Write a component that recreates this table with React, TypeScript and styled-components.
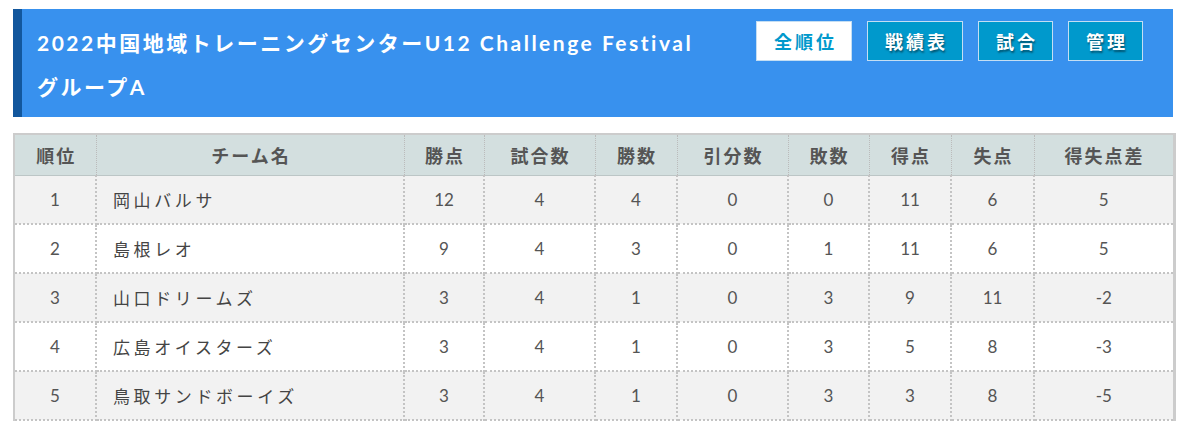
import styled, { createGlobalStyle } from 'styled-components';

interface TeamRow {
  rank: number;
  name: string;
  points: number;
  played: number;
  won: number;
  drawn: number;
  lost: number;
  goalsFor: number;
  goalsAgainst: number;
}

const ROWS: TeamRow[] = [
  { rank: 1, name: '岡山バルサ', points: 12, played: 4, won: 4, drawn: 0, lost: 0, goalsFor: 11, goalsAgainst: 6 },
  { rank: 2, name: '島根レオ', points: 9, played: 4, won: 3, drawn: 0, lost: 1, goalsFor: 11, goalsAgainst: 6 },
  { rank: 3, name: '山口ドリームズ', points: 3, played: 4, won: 1, drawn: 0, lost: 3, goalsFor: 9, goalsAgainst: 11 },
  { rank: 4, name: '広島オイスターズ', points: 3, played: 4, won: 1, drawn: 0, lost: 3, goalsFor: 5, goalsAgainst: 8 },
  { rank: 5, name: '鳥取サンドボーイズ', points: 3, played: 4, won: 1, drawn: 0, lost: 3, goalsFor: 3, goalsAgainst: 8 },
];

const COLUMNS = [
  { label: '順位', width: 82 },
  { label: 'チーム名', width: 308 },
  { label: '勝点', width: 80 },
  { label: '試合数', width: 111 },
  { label: '勝数', width: 82 },
  { label: '引分数', width: 111 },
  { label: '敗数', width: 81 },
  { label: '得点', width: 82 },
  { label: '失点', width: 83 },
  { label: '得失点差', width: 140 },
];

const NAV = ['全順位', '戦績表', '試合', '管理'];

const GlobalStyle = createGlobalStyle`
  body {
    margin: 0;
    background: #fff;
    font-family: Lato, 'Noto Sans CJK JP', sans-serif;
  }
`;

const Page = styled.div`
  padding: 9px 12px 0 13px;
  width: 1160px;
`;

const TitleBar = styled.header`
  display: flex;
  justify-content: space-between;
  align-items: flex-start;
  background: #3891ee;
  border-left: 9px solid #12579d;
  height: 108px;
  box-sizing: border-box;
  padding: 12px 30px 0 15px;
`;

const Title = styled.h1`
  margin: 0;
  color: #fff;
  font-family: Lato, 'Noto Sans CJK JP', sans-serif;
  font-size: 21px;
  font-weight: 700;
  line-height: 44px;
  letter-spacing: 2.5px;
`;

const Nav = styled.nav`
  display: flex;
  gap: 15px;
`;

const NavButton = styled.a<{ $active?: boolean }>`
  display: block;
  height: 40px;
  box-sizing: border-box;
  padding: 0 14px 0 17px;
  border: 1px solid #c4def3;
  background: ${(p) => (p.$active ? '#fff' : '#0099cc')};
  color: ${(p) => (p.$active ? '#0099cc' : '#fff')};
  font-family: 'Noto Sans CJK JP', sans-serif;
  font-size: 18px;
  font-weight: 700;
  line-height: 38px;
  letter-spacing: 3px;
  text-shadow: ${(p) => (p.$active ? 'none' : '1px 2px 2px rgba(0, 0, 0, 0.45)')};
  cursor: pointer;
`;

const Table = styled.table`
  margin-top: 16px;
  width: 1160px;
  table-layout: fixed;
  border-collapse: collapse;
  border-top: 2px solid #cccccc;
  border-left: 2px solid #cccccc;
  border-right: 3px solid #cccccc;
`;

const HeadCell = styled.th`
  height: 40px;
  padding: 0 0 0 2px;
  background: #d3dfdf;
  color: #555;
  font-family: 'Noto Sans CJK JP', sans-serif;
  font-size: 18px;
  font-weight: 700;
  letter-spacing: 2px;
  text-align: center;
  border-bottom: 1px solid #bcc6c6;
  border-right: 1px dotted #bbb;
  &:last-child {
    border-right: none;
  }
`;

const BodyRow = styled.tr<{ $shaded: boolean }>`
  background: ${(p) => (p.$shaded ? '#f2f2f2' : '#fff')};
`;

const Cell = styled.td<{ $left?: boolean }>`
  height: 47px;
  padding: 0 ${(p) => (p.$left ? '16px' : '0')};
  color: #555;
  font-family: Lato, 'Noto Sans CJK JP', sans-serif;
  font-size: 17px;
  text-align: ${(p) => (p.$left ? 'left' : 'center')};
  border-bottom: 2px dotted #c4c4c4;
  border-right: 2px dotted #c4c4c4;
  &:last-child {
    border-right: none;
  }
`;

const Name = styled.span`
  font-family: 'Noto Sans CJK JP', sans-serif;
  color: #444;
  letter-spacing: 3.6px;
`;

export default function App() {
  return (
    <>
      <GlobalStyle />
      <Page>
        <TitleBar>
          <Title>
            2022中国地域トレーニングセンターU12 Challenge Festival
            <br />
            グループA
          </Title>
          <Nav>
            {NAV.map((label, i) => (
              <NavButton key={label} $active={i === 0}>
                {label}
              </NavButton>
            ))}
          </Nav>
        </TitleBar>
        <Table>
          <colgroup>
            {COLUMNS.map((c) => (
              <col key={c.label} style={{ width: c.width }} />
            ))}
          </colgroup>
          <thead>
            <tr>
              {COLUMNS.map((c) => (
                <HeadCell key={c.label}>{c.label}</HeadCell>
              ))}
            </tr>
          </thead>
          <tbody>
            {ROWS.map((r, i) => (
              <BodyRow key={r.rank} $shaded={i % 2 === 0}>
                <Cell>{r.rank}</Cell>
                <Cell $left>
                  <Name>{r.name}</Name>
                </Cell>
                <Cell>{r.points}</Cell>
                <Cell>{r.played}</Cell>
                <Cell>{r.won}</Cell>
                <Cell>{r.drawn}</Cell>
                <Cell>{r.lost}</Cell>
                <Cell>{r.goalsFor}</Cell>
                <Cell>{r.goalsAgainst}</Cell>
                <Cell>{r.goalsFor - r.goalsAgainst}</Cell>
              </BodyRow>
            ))}
          </tbody>
        </Table>
      </Page>
    </>
  );
}
